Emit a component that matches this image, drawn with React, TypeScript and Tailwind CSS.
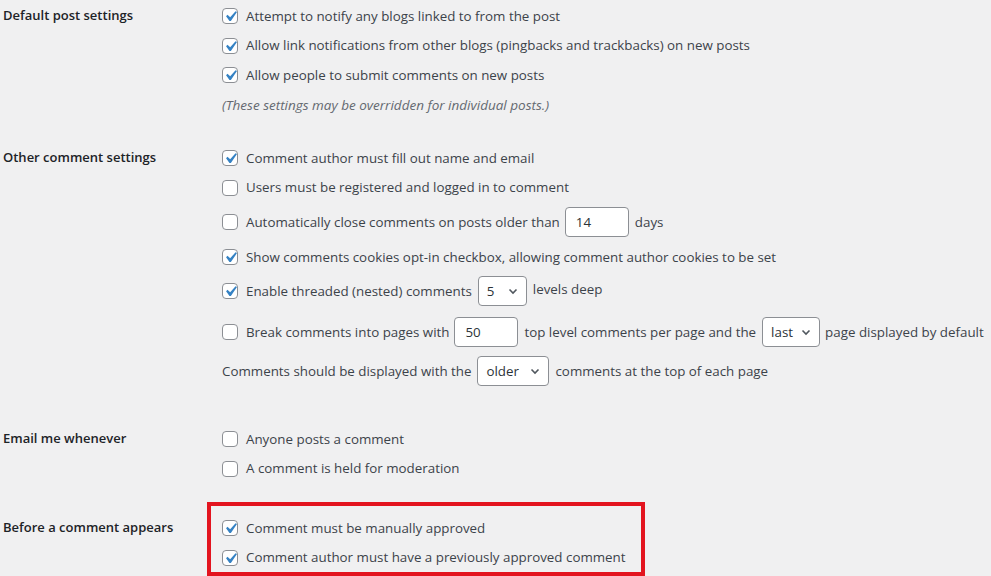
import React from 'react'

function Checkbox({ checked }: { checked?: boolean }) {
  return (
    <span className="relative inline-block w-4 h-4 shrink-0 rounded-[4px] border border-[#8c8f94] bg-white">
      {checked && (
        <svg className="absolute left-[-3px] top-[-3px] w-[21px] h-[21px]" viewBox="0 0 20 20">
          <path fill="#3582c4" d="M14.83 4.89l1.34.94-5.81 8.38H9.02L5.78 9.67l1.34-1.25 2.57 2.4z" />
        </svg>
      )}
    </span>
  )
}

function TextBox({ value }: { value: string }) {
  return (
    <span className="inline-flex items-center w-[64px] h-[30px] shrink-0 rounded-[4px] border border-[#8c8f94] bg-white pl-[10px] text-[#2c3338]">
      {value}
    </span>
  )
}

function Select({ value, width }: { value: string; width: string }) {
  return (
    <span className={`inline-flex items-center justify-between h-[30px] shrink-0 rounded-[4px] border border-[#8c8f94] bg-white pl-[8px] pr-[7px] text-[#2c3338] ${width}`}>
      <span>{value}</span>
      <svg width="12" height="12" viewBox="0 0 12 12">
        <path d="M2.5 4.5 6 8l3.5-3.5" fill="none" stroke="#50575e" strokeWidth="1.6" />
      </svg>
    </span>
  )
}

function CheckRow({ checked, h = 'h-[30px]', children }: { checked?: boolean; h?: string; children: React.ReactNode }) {
  return (
    <div className={`flex items-center whitespace-nowrap ${h}`}>
      <Checkbox checked={checked} />
      <span className="ml-2 flex items-center">{children}</span>
    </div>
  )
}

function Label({ children, className = '' }: { children: React.ReactNode; className?: string }) {
  return (
    <div className={`w-[219px] shrink-0 ${className}`}>
      <div className="h-[30px] flex items-center font-semibold text-[13px] text-[#1d2327]">{children}</div>
    </div>
  )
}

export default function App() {
  return (
    <div
      className="w-[991px] h-[576px] overflow-hidden bg-[#f0f0f1] pl-[3px] pt-[1px] text-[13.35px] text-[#3c434a]"
      style={{ fontFamily: '"Open Sans", "Noto Sans", sans-serif' }}
    >
      {/* Default post settings */}
      <div className="flex">
        <Label>Default post settings</Label>
        <div className="flex flex-col">
          <CheckRow checked>Attempt to notify any blogs linked to from the post</CheckRow>
          <CheckRow checked h="h-[29px]">Allow link notifications from other blogs (pingbacks and trackbacks) on new posts</CheckRow>
          <CheckRow checked>Allow people to submit comments on new posts</CheckRow>
          <div className="h-[30px] flex items-center italic text-[13.5px] text-[#646970]">
            (These settings may be overridden for individual posts.)
          </div>
        </div>
      </div>

      {/* Other comment settings */}
      <div className="flex mt-[23px]">
        <Label>Other comment settings</Label>
        <div className="flex flex-col">
          <CheckRow checked>Comment author must fill out name and email</CheckRow>
          <CheckRow h="h-[29px]">Users must be registered and logged in to comment</CheckRow>
          <CheckRow h="h-[40px]">
            Automatically close comments on posts older than
            <span className="ml-[5px]"><TextBox value="14" /></span>
            <span className="ml-[6px]">days</span>
          </CheckRow>
          <CheckRow checked>Show comments cookies opt-in checkbox, allowing comment author cookies to be set</CheckRow>
          <CheckRow checked h="h-[38px]">
            Enable threaded (nested) comments
            <span className="ml-[6px]"><Select value="5" width="w-[49px]" /></span>
            <span className="ml-[6px] -mt-[3px]">levels deep</span>
          </CheckRow>
          <CheckRow h="h-[44px]">
            Break comments into pages with
            <span className="ml-[5px]"><TextBox value="50" /></span>
            <span className="ml-[6px]">top level comments per page and the</span>
            <span className="ml-[6px]"><Select value="last" width="w-[58px]" /></span>
            <span className="ml-[5px]">page displayed by default</span>
          </CheckRow>
          <div className="h-[34px] flex items-center whitespace-nowrap">
            Comments should be displayed with the
            <span className="ml-[6px]"><Select value="older" width="w-[72px]" /></span>
            <span className="ml-[6px]">comments at the top of each page</span>
          </div>
        </div>
      </div>

      {/* Email me whenever */}
      <div className="flex mt-[36px]">
        <Label>Email me whenever</Label>
        <div className="flex flex-col">
          <CheckRow>Anyone posts a comment</CheckRow>
          <CheckRow h="h-[29px]">A comment is held for moderation</CheckRow>
        </div>
      </div>

      {/* Before a comment appears */}
      <div className="flex mt-[19px]">
        <Label className="pt-[11px]">Before a comment appears</Label>
        <div className="ml-[-15px] w-[438px] flex flex-col border-4 border-[#e3141f] pt-[7px] pl-[11px]">
          <CheckRow checked>Comment must be manually approved</CheckRow>
          <CheckRow checked h="h-[29px]">Comment author must have a previously approved comment</CheckRow>
        </div>
      </div>
    </div>
  )
}
